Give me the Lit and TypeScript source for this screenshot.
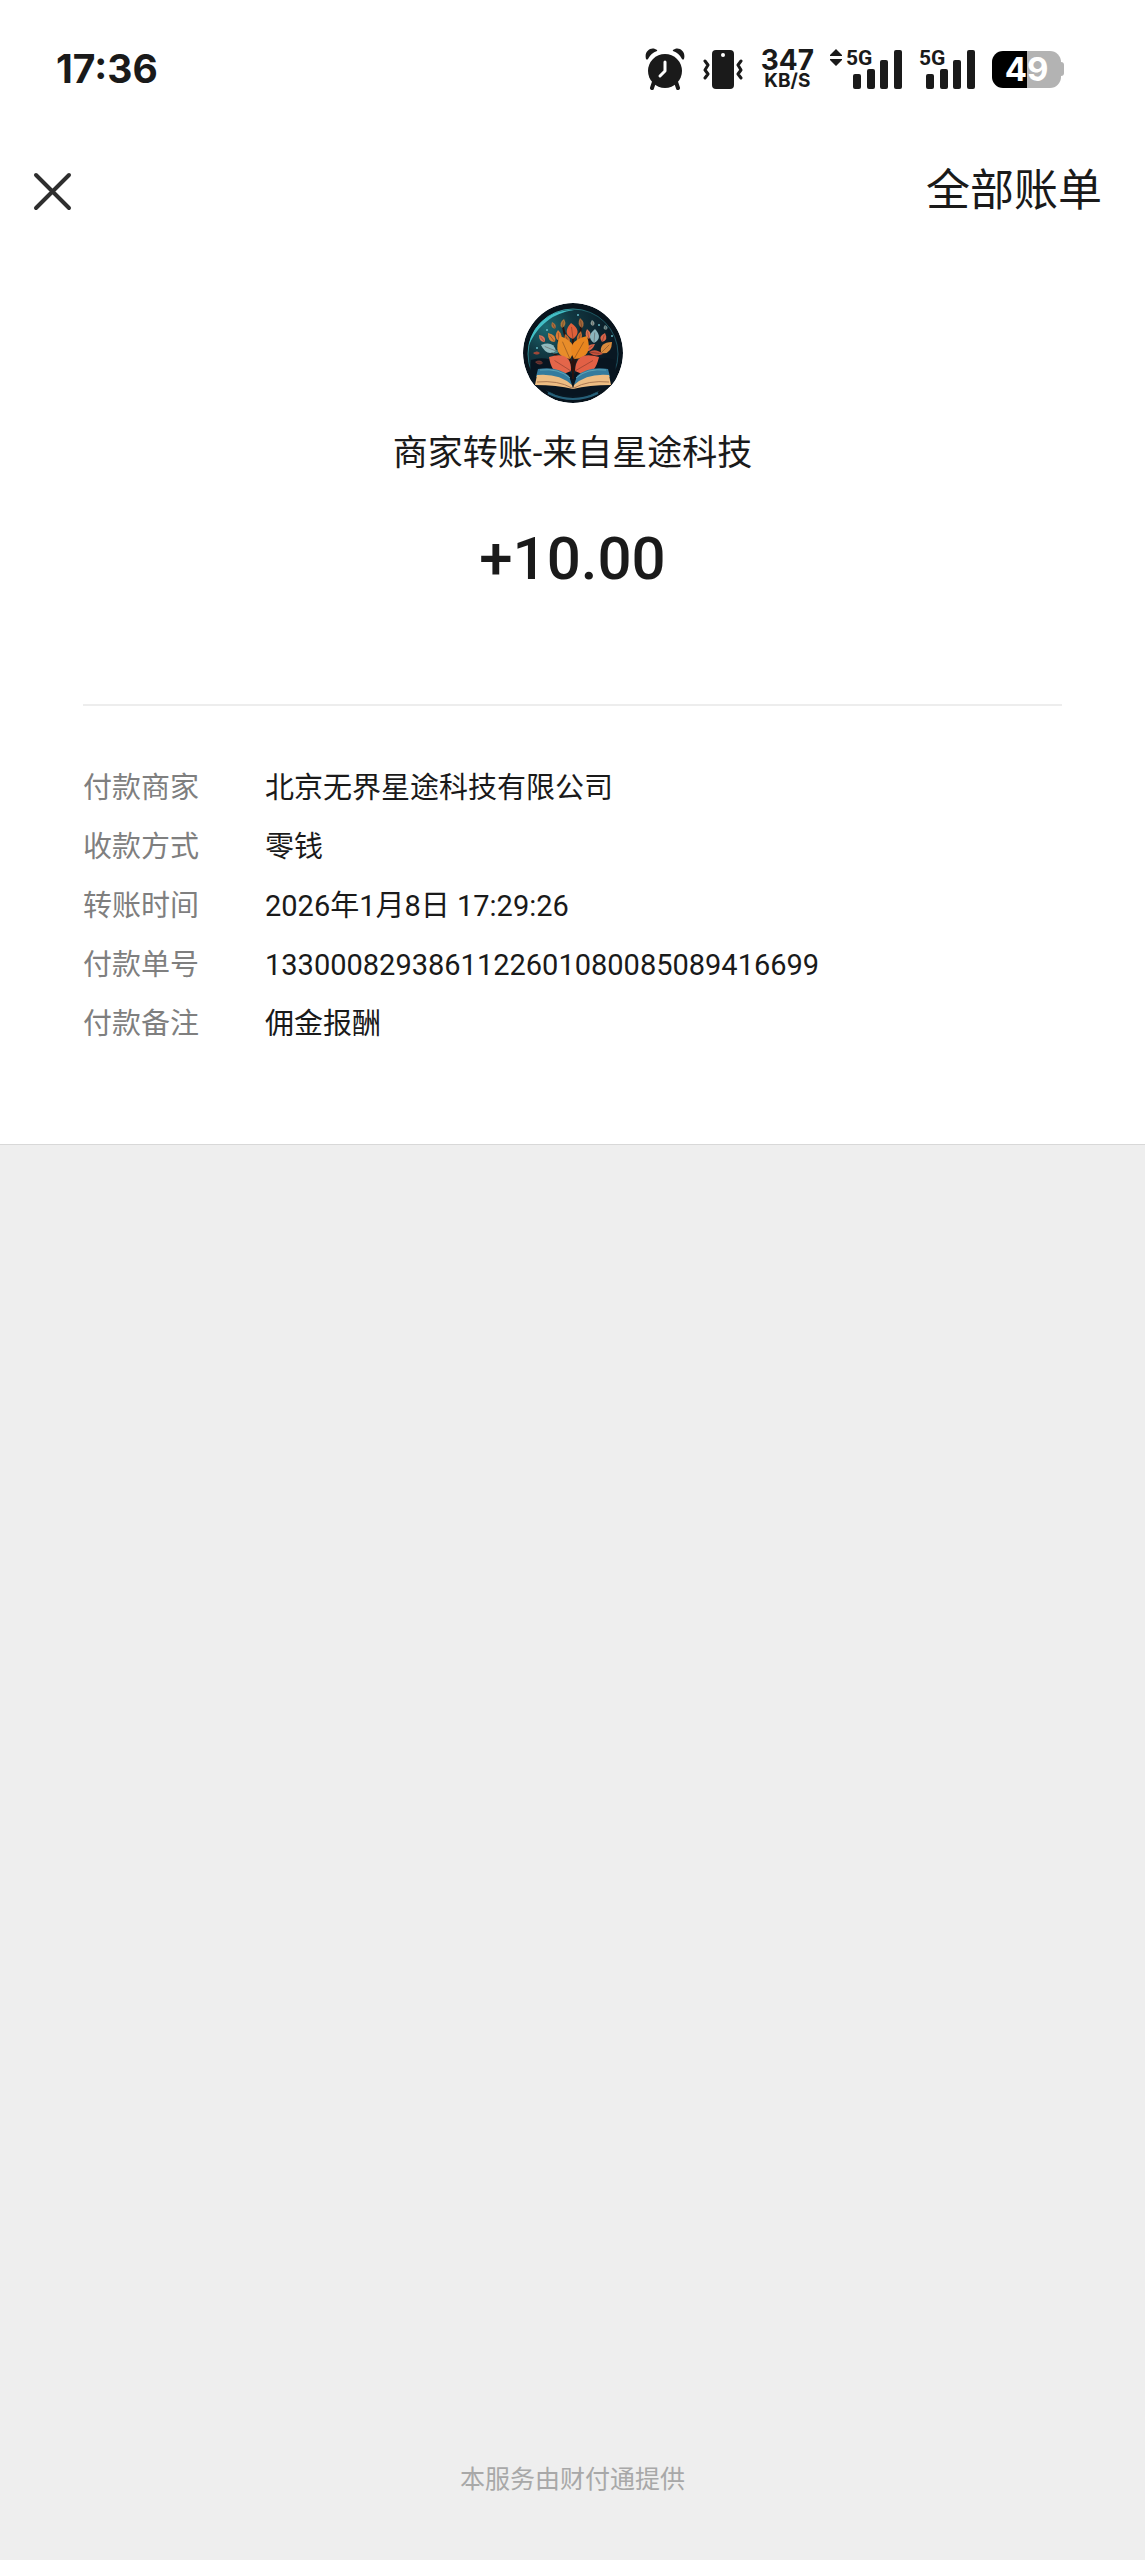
import { LitElement, html, svg, css } from 'lit';
import { customElement, property } from 'lit/decorators.js';

// tip x, tip y, base x, base y, width, colour
type Leaf = [number, number, number, number, number, string];

const LEAVES: Leaf[] = [
  [12, 59, 20, 60, 4, '#6b3531'],
  [10, 50, 17, 50, 3, '#b5503e'],
  [29, 19, 32, 26, 4, '#b0703c'],
  [41, 16, 39, 25, 5, '#a8763a'],
  [57, 15, 59, 25, 5, '#a5683a'],
  [69, 17, 70, 23, 4, '#8a9c98'],
  [82, 22, 83, 27, 4, '#6f8f92'],
  [42, 31, 46, 41, 5, '#c56b2e'],
  [58, 28, 55, 40, 5, '#c56b2e'],
  [25, 30, 32, 39, 6, '#d5803a'],
  [35, 27, 36, 38, 6, '#dd7a34'],
  [64, 26, 66, 36, 5, '#e07352'],
  [82, 30, 79, 39, 6, '#d9644a'],
  [16, 32, 22, 39, 5, '#d2735c'],
  [29, 50, 36, 48, 3, '#4a98a0'],
  [72, 41, 62, 48, 5, '#d9674c'],
  [80, 51, 66, 49, 5, '#c7523d'],
  [18, 42, 33, 48, 9, '#8fb9bd'],
  [72, 26, 71, 40, 9, '#8ab4bd'],
  [89, 39, 78, 50, 9, '#d88a3c'],
  [48, 20, 50, 36, 11, '#e0603a'],
  [37, 33, 47, 56, 16, '#e88d2a'],
  [64, 33, 51, 56, 17, '#e9861f'],
  [26, 54, 48, 68, 18, '#e4664a'],
  [76, 54, 52, 68, 18, '#e26045'],
];

function leafShape([tx, ty, bx, by, w, fill]: Leaf) {
  const len = Math.hypot(bx - tx, by - ty);
  const nx = (-(by - ty) / len) * w;
  const ny = ((bx - tx) / len) * w;
  const mx = tx * 0.4 + bx * 0.6;
  const my = ty * 0.4 + by * 0.6;
  return svg`
    <path fill=${fill} d="M${tx} ${ty}Q${mx + nx} ${my + ny} ${bx} ${by}Q${mx - nx} ${my - ny} ${tx} ${ty}Z"/>
    <path fill="none" stroke="#3a1d18" stroke-opacity="0.5" stroke-width="0.7"
      d="M${(tx * 3 + bx) / 4} ${(ty * 3 + by) / 4}L${bx} ${by}"/>
  `;
}

@customElement('signal-bars')
export class SignalBars extends LitElement {
  static styles = css`
    :host {
      display: block;
    }
    .icon {
      display: block;
      fill: #1a1a1a;
    }
    .net {
      font: 700 21px Roboto, sans-serif;
    }
  `;

  @property({ type: Boolean }) active = false;

  render() {
    return html`
      <svg class="icon" width="73" height="50" viewBox="-18 -4 73 50" role="img" aria-label="5G">
        ${this.active ? svg`<path d="M-18 7l6-6 6 6v1h-12zM-18 11h12v1l-6 6-6-6z"/>` : ''}
        <text class="net" x="-2" y="17">5G</text>
        <rect x="5" y="26" width="8" height="15" rx="2"/>
        <rect x="19" y="21" width="8" height="20" rx="2"/>
        <rect x="32" y="12" width="8" height="29" rx="2"/>
        <rect x="46" y="2" width="8" height="39" rx="2"/>
      </svg>
    `;
  }
}

@customElement('status-bar')
export class StatusBar extends LitElement {
  static styles = css`
    :host {
      display: flex;
      align-items: center;
      justify-content: space-between;
      padding: 44px 81px 44px 56px;
      height: 50px;
      color: #1a1a1a;
      font-family: Inter, "Liberation Sans", sans-serif;
    }
    .time {
      font-size: 39px;
      font-weight: 700;
      line-height: 48px;
    }
    .icons {
      display: flex;
      align-items: center;
    }
    .icon {
      display: block;
    }
    .vibrate {
      margin-left: 18px;
    }
    .speed {
      margin-left: 18px;
      display: flex;
      flex-direction: column;
      align-items: center;
      font-weight: 700;
    }
    .rate {
      font-size: 28px;
      line-height: 24px;
    }
    .unit {
      font-size: 19px;
      line-height: 18px;
    }
    .first {
      margin-left: 16px;
    }
    .battery {
      margin-left: 16px;
      display: flex;
      align-items: center;
    }
    .level {
      width: 69px;
      border-radius: 11px;
      background: linear-gradient(to right, #000 51%, #b3b3b3 51%);
      color: #fff;
      font-size: 33px;
      font-weight: 700;
      line-height: 37px;
      text-align: center;
    }
    .cap {
      width: 3px;
      height: 14px;
      border-radius: 0 3px 3px 0;
      background: #b3b3b3;
    }
  `;

  render() {
    return html`
      <span class="time">17:36</span>
      <div class="icons">
        <svg class="icon" width="40" height="42" viewBox="0 0 40 42" fill="#1a1a1a" aria-hidden="true">
          <circle cx="20" cy="23" r="17"/>
          <path d="M1 11C-1 4 5-1 10 1Q13 2 12 3Q6 5 3 11Q2 12 1 11ZM39 11C41 4 35-1 30 1Q27 2 28 3Q34 5 37 11Q38 12 39 11Z"/>
          <path d="M9 34L7 40M31 34L33 40" stroke="#1a1a1a" stroke-width="4" stroke-linecap="round"/>
          <path d="M20 14V23L15 28" fill="none" stroke="#fff" stroke-width="3" stroke-linecap="round" stroke-linejoin="round"/>
        </svg>
        <svg class="icon vibrate" width="40" height="42" viewBox="0 0 40 42" aria-hidden="true">
          <rect x="9" y="2" width="22" height="39" rx="4" fill="#1a1a1a"/>
          <circle cx="20" cy="7" r="2" fill="#fff"/>
          <path d="M2 13L5 17L2 22L5 26L2 30M38 13L35 17L38 22L35 26L38 30" fill="none" stroke="#1a1a1a" stroke-width="3" stroke-linecap="round" stroke-linejoin="round"/>
        </svg>
        <div class="speed">
          <span class="rate">347</span>
          <span class="unit">KB/S</span>
        </div>
        <signal-bars class="first" active></signal-bars>
        <signal-bars></signal-bars>
        <div class="battery">
          <div class="level">49</div>
          <div class="cap"></div>
        </div>
      </div>
    `;
  }
}

@customElement('merchant-logo')
export class MerchantLogo extends LitElement {
  static styles = css`
    :host {
      display: block;
    }
    .logo {
      display: block;
      border-radius: 50%;
    }
  `;

  render() {
    return html`
      <svg class="logo" width="100" height="100" viewBox="0 0 100 100" aria-hidden="true">
        <defs>
          <radialGradient id="sky" cx="0.2" cy="0.2" r="0.75">
            <stop offset="0" stop-color="#1b6870"/>
            <stop offset="0.4" stop-color="#113842"/>
            <stop offset="1" stop-color="#091823"/>
          </radialGradient>
          <linearGradient id="rim" x1="0" y1="0" x2="1" y2="1">
            <stop offset="0.1" stop-color="#48cbd0"/>
            <stop offset="0.35" stop-color="#1c5862"/>
            <stop offset="1" stop-color="#1c4a5c"/>
          </linearGradient>
        </defs>
        <circle cx="50" cy="50" r="50" fill="#08131c"/>
        <circle cx="50" cy="51" r="45" fill="url(#sky)" stroke="url(#rim)" stroke-width="1"/>
        <path d="M6 42C10 20 30 6 51 7C30 10 15 22 6 42Z" fill="#43bfc6"/>
        <path d="M8 57Q30 50 50 72Q70 50 92 57L94 80Q50 105 6 80Z" fill="#081520"/>
        <path d="M50 76V30M50 66Q46 50 35 37M50 66Q54 48 67 36M50 68Q38 54 24 46M50 68Q62 54 82 46M50 50Q42 36 40 24M50 50Q57 36 58 24" fill="none" stroke="#29130f" stroke-width="2"/>
        ${LEAVES.map(leafShape)}
        <g fill="#66b8c4">
          <circle cx="55" cy="12" r="1"/>
          <circle cx="24" cy="27" r="1"/>
          <circle cx="76" cy="22" r="1"/>
          <circle cx="89" cy="33" r="1"/>
          <circle cx="14" cy="45" r="1"/>
        </g>
        <path d="M15 66Q35 63 46 73L49 82Q34 73 13 74ZM85 66Q65 63 54 73L51 82Q66 73 87 74Z" fill="#347b9d"/>
        <path d="M17 67Q36 65 47 75M83 67Q64 65 53 75" fill="none" stroke="#5da5b8" stroke-width="1"/>
        <path d="M14 72Q36 70 49 82L50 86Q34 82 12 82ZM86 72Q64 70 51 82L50 86Q66 82 88 82Z" fill="#edbd83"/>
        <path d="M14 79Q35 77 49 85M86 79Q65 77 51 85" fill="none" stroke="#a97852" stroke-width="1"/>
        <path d="M25 90Q50 102 75 90" fill="none" stroke="#266079" stroke-width="2"/>
      </svg>
    `;
  }
}

@customElement('app-root')
export class AppRoot extends LitElement {
  static styles = css`
    :host {
      display: flex;
      flex-direction: column;
      min-height: 100vh;
      background: #eee;
      color: #1a1a1a;
      font-family: Roboto, "Noto Sans CJK SC", sans-serif;
    }
    .bill {
      background: #fff;
      border-bottom: 1px solid #d8d8d8;
      padding-bottom: 100px;
    }
    .nav {
      display: flex;
      align-items: center;
      justify-content: space-between;
      padding: 21px 43px 21px 32px;
    }
    .close {
      border: 0;
      padding: 0;
      background: none;
    }
    .close svg {
      display: block;
    }
    .all {
      color: inherit;
      text-decoration: none;
      font-size: 44px;
      line-height: 64px;
    }
    .summary {
      display: flex;
      flex-direction: column;
      align-items: center;
      padding-top: 59px;
    }
    .title {
      margin: 26px 0 0;
      font-size: 35px;
      font-weight: 400;
      line-height: 50px;
    }
    .amount {
      margin: 44px 0 0;
      font-size: 60px;
      font-weight: 500;
      line-height: 72px;
    }
    .details {
      margin: 109px 83px 0;
      padding-top: 62px;
      border-top: 2px solid #ededed;
      display: grid;
      grid-template-columns: auto 1fr;
      column-gap: 66px;
      row-gap: 19px;
      font-size: 29px;
      line-height: 40px;
    }
    .label {
      color: #7f7f7f;
    }
    .value {
      margin: 0;
      overflow-wrap: anywhere;
    }
    .provider {
      margin: auto 0 0;
      padding-bottom: 62px;
      color: #a8a8a8;
      font-size: 25px;
      line-height: 36px;
      text-align: center;
    }
  `;

  static get properties() {
    return {
      rows: { type: Array },
    };
  }

  rows = [
    ['付款商家', '北京无界星途科技有限公司'],
    ['收款方式', '零钱'],
    ['转账时间', '2026年1月8日 17:29:26'],
    ['付款单号', '1330008293861122601080085089416699'],
    ['付款备注', '佣金报酬'],
  ];

  render() {
    return html`
      <main class="bill">
        <status-bar></status-bar>
        <nav class="nav">
          <button class="close" type="button" aria-label="关闭">
            <svg width="40" height="40" viewBox="0 0 40 40" fill="none" stroke="#2e2e2e" stroke-width="4" stroke-linecap="round">
              <path d="M4 4L37 37M37 4L4 37"/>
            </svg>
          </button>
          <a class="all" href="#">全部账单</a>
        </nav>
        <section class="summary">
          <merchant-logo></merchant-logo>
          <h1 class="title">商家转账-来自星途科技</h1>
          <p class="amount">+10.00</p>
        </section>
        <dl class="details">
          ${this.rows.map(([label, value]) => html`
            <dt class="label">${label}</dt>
            <dd class="value">${value}</dd>
          `)}
        </dl>
      </main>
      <p class="provider">本服务由财付通提供</p>
    `;
  }
}
